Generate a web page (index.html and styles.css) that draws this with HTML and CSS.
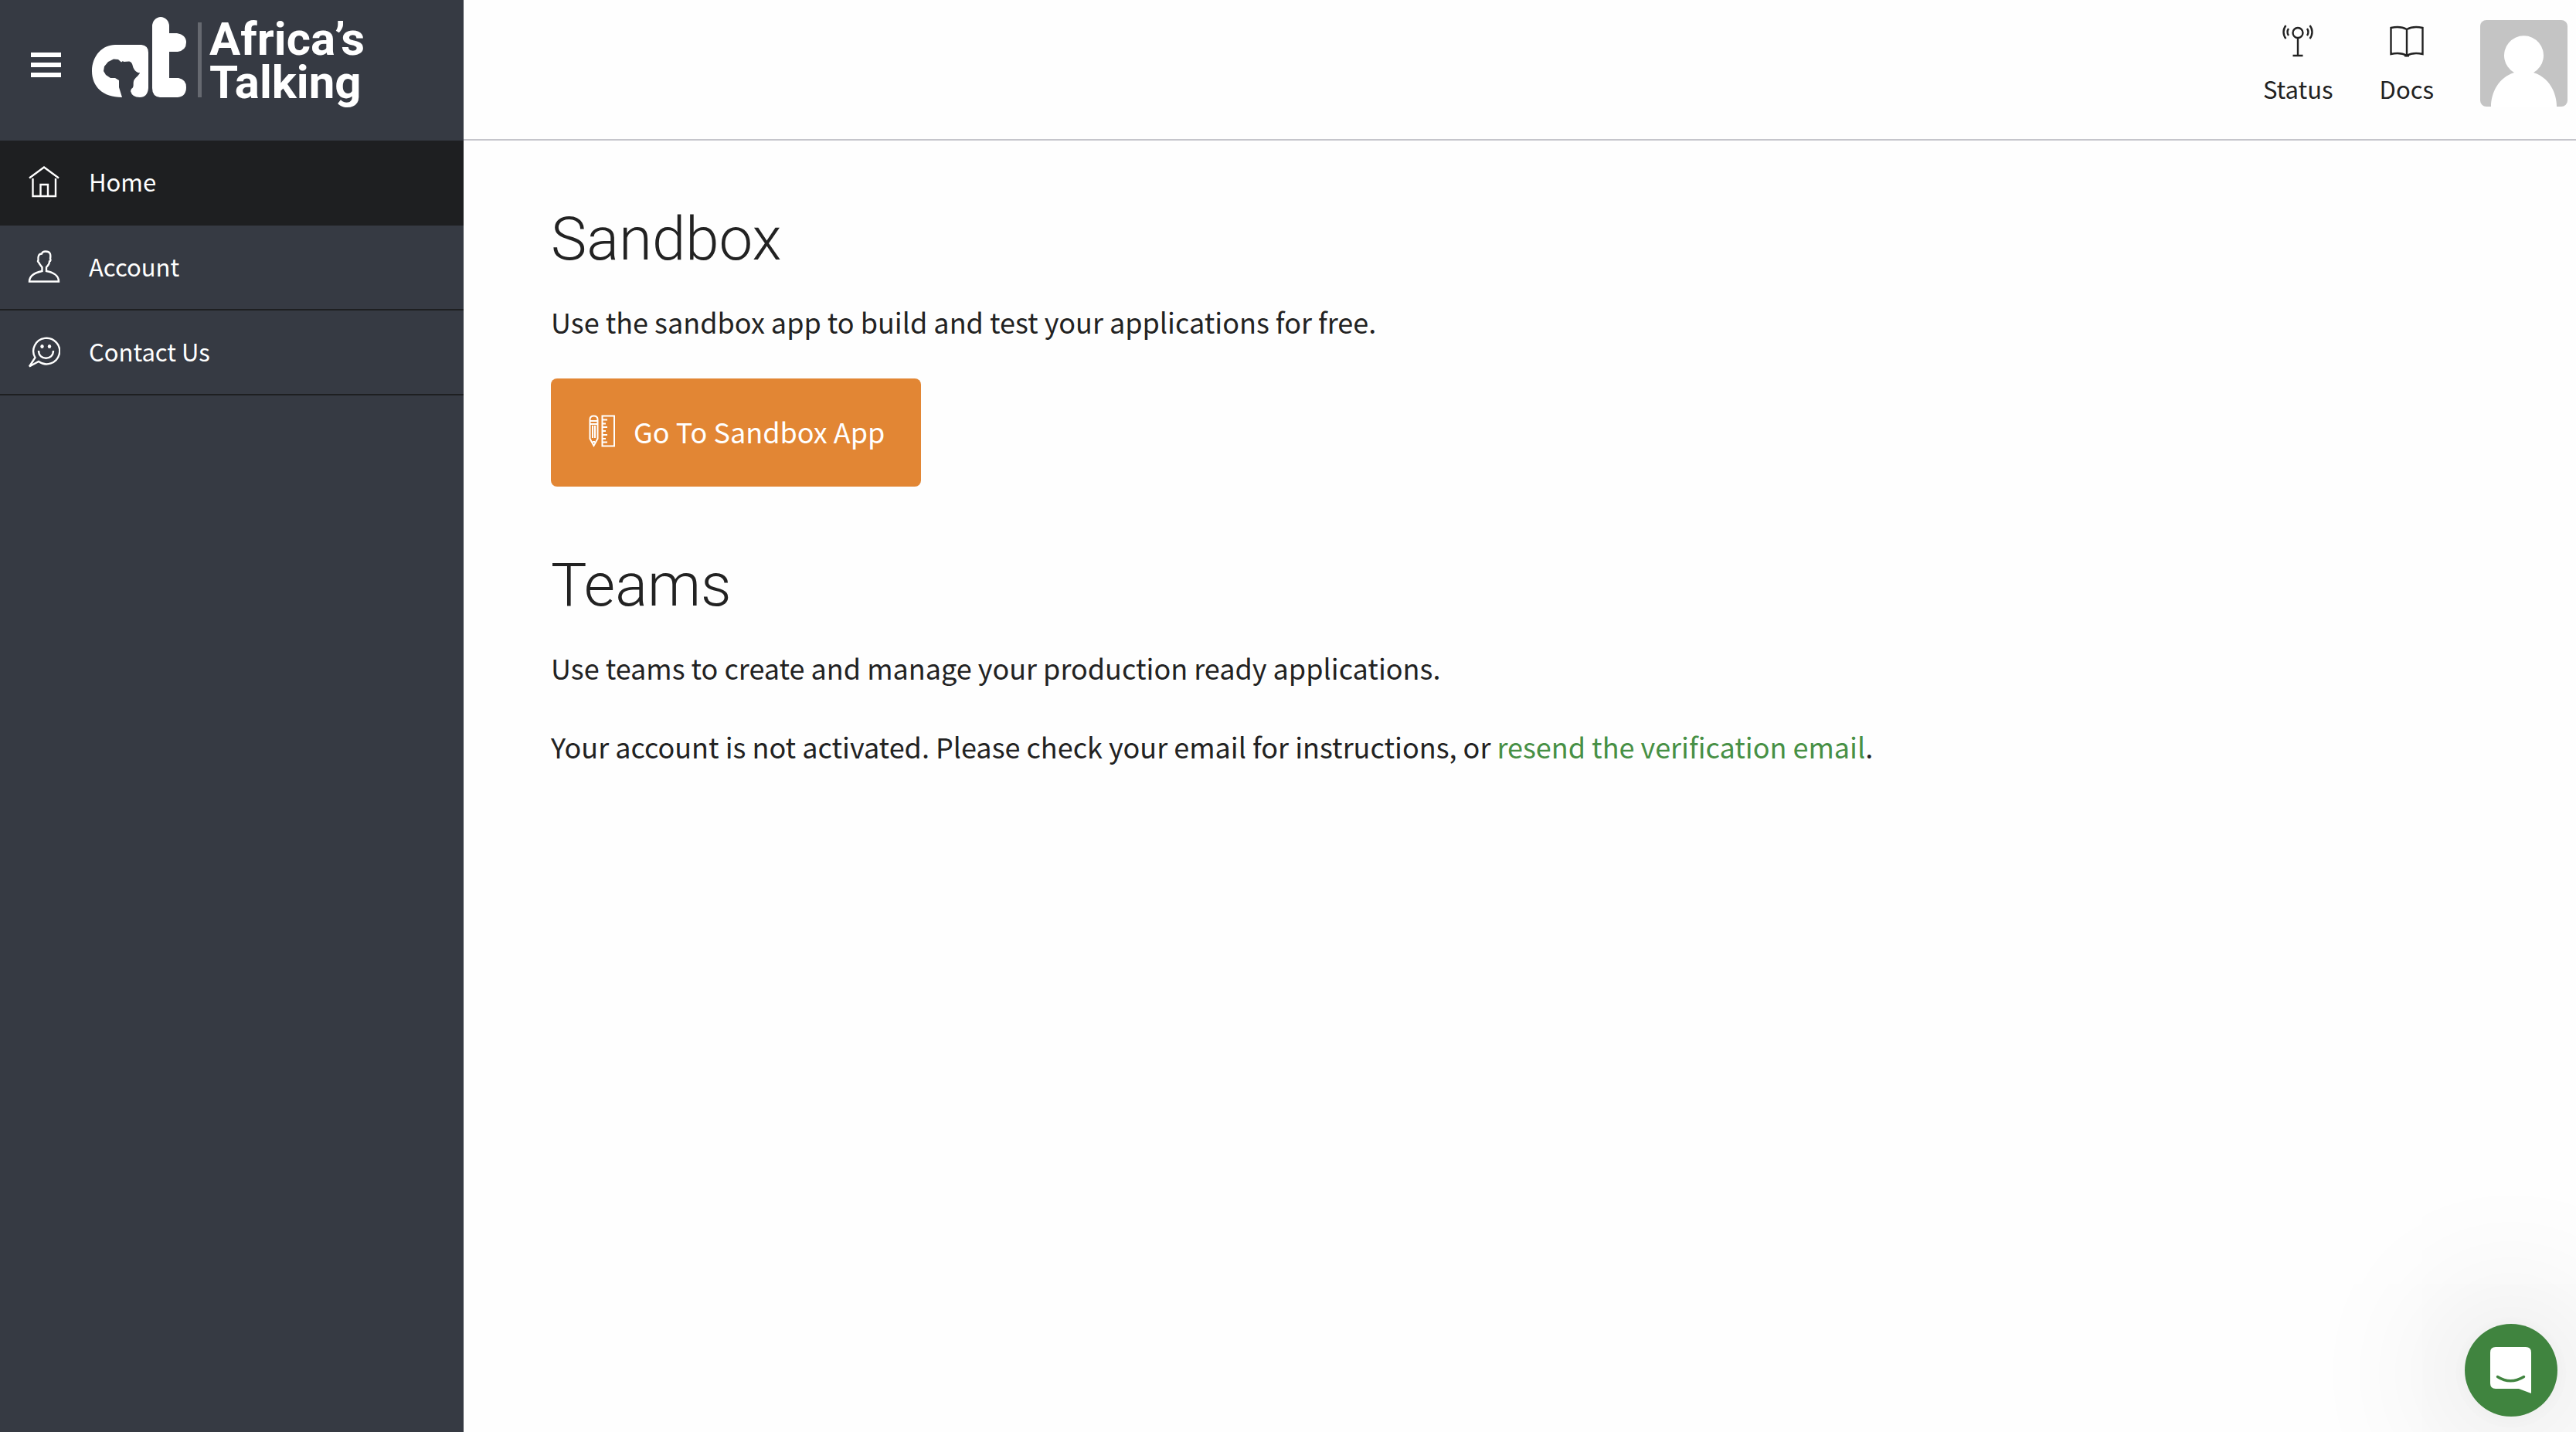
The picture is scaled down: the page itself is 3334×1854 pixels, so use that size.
FILE: index.html
```html
<!DOCTYPE html>
<html lang="en">
<head>
  <meta charset="utf-8">
  <meta name="viewport" content="width=device-width, initial-scale=1">
  <title>Home | Africa's Talking</title>
  <link rel="stylesheet" href="styles.css">
</head>
<body>
  <div class="shell">
    <aside class="sidebar">
      <div class="brand">
        <button class="menu-toggle" type="button" aria-label="Toggle menu">
          <span class="bar"></span><span class="bar"></span><span class="bar"></span>
        </button>
        <a class="logo" href="#" aria-label="Africa's Talking">
          <svg class="logo-mark" viewBox="0 0 142 106" aria-hidden="true">
            <path fill="#fff" d="M30 37H64Q73 38 73 47V93Q72 105 62 105Q52 105 50 97L51 94C55 92 53 88 54 84C55 80 61 77 62 73V73C58 74 54 69 53 65C52 61 51 59 48 58.500L41 59L40 58L38 59.500L34 56L28 55.500L21 59L16 65L15 71L18 76L24 80H30L35 83V92L39 105C14 105 0 91 0 71C0 51 14 37 30 37Z"/>
            <path fill="#fff" d="M78 13A11 12 0 0 1 100 13V22H110Q122 24 122 34Q122 44 111 46H100V80H112Q122 82 122 92Q122 104 111 105H88Q78 104 78 93Z"/>
            <path fill="#666970" d="M137 8h5v97h-5z"/>
          </svg>
          <span class="logo-name">Africa’s<br>Talking</span>
        </a>
      </div>
      <nav class="nav">
        <a class="nav-item nav-item-active" href="#">
          <svg class="nav-icon" viewBox="0 0 42 42" aria-hidden="true">
            <path d="M2 16.500L21 2.500L40 16.500M6.500 17V40H36V17M16.500 40V25H26V40"/>
          </svg>
          <span>Home</span>
        </a>
        <a class="nav-item" href="#">
          <svg class="nav-icon" viewBox="0 0 42 42" aria-hidden="true">
            <path d="M2 40.500H40C40 33 33 28.500 24 27V22C27 19 28 17 28 14.500C30 14 29.500 12 29 11C30 5 29 1.500 23 1.500C20 1.500 18.500 2.500 18 4.500C14 4.500 13 8 13.500 13C12.500 14 13 15 14 15.500C15 18 17 20 18.500 22V27C9 29 2 33 2 40.500Z"/>
          </svg>
          <span>Account</span>
        </a>
        <a class="nav-item" href="#">
          <svg class="nav-icon" viewBox="0 0 42 42" aria-hidden="true">
            <path d="M14 34A17 16.800 0 1 0 9.500 29L2 40.500L14 34ZM14 20C14 33 33 33 33 20"/>
            <ellipse cx="18.500" cy="14.500" rx="2.200" ry="2.500" fill="#fff" stroke="none"/>
            <ellipse cx="28" cy="14.500" rx="2.200" ry="2.500" fill="#fff" stroke="none"/>
          </svg>
          <span>Contact Us</span>
        </a>
      </nav>
    </aside>

    <div class="page">
      <header class="topbar">
        <a class="top-link" href="#">
          <svg class="top-icon" viewBox="0 0 46 42" aria-hidden="true">
            <circle cx="23" cy="10.500" r="6.500"/>
            <path d="M23 17V40M16.500 40H29.500M7.500 1C3.500 6 3.500 13 7.500 18M11 5C9 8 9 11 11 14M38.500 1C42.500 6 42.500 13 38.500 18M35 5C37 8 37 11 35 14"/>
          </svg>
          <span>Status</span>
        </a>
        <a class="top-link" href="#">
          <svg class="top-icon" viewBox="0 0 46 42" aria-hidden="true">
            <path d="M23 6C17 2.500 9 2.500 2.500 4V38C9 36.500 17 36.500 23 40C29 36.500 37 36.500 43.500 38V4C37 2.500 29 2.500 23 6V39"/>
            <path d="M20 40H26" stroke-width="3"/>
          </svg>
          <span>Docs</span>
        </a>
        <button class="avatar" type="button" aria-label="Your profile">
          <svg class="avatar-image" viewBox="0 0 113 112" aria-hidden="true">
            <path fill="#c4c4c4" d="M0 0h113v112H0z"/>
            <path fill="#fff" d="M44 68A25.500 25.500 0 1 1 69 68C89 74 99 94 99 112H14C14 94 24 74 44 68Z"/>
          </svg>
        </button>
      </header>

      <main class="content">
        <section class="section">
          <h1 class="title">Sandbox</h1>
          <p class="text">Use the sandbox app to build and test your applications for free.</p>
          <a class="sandbox-button" href="#">
            <svg class="button-icon" viewBox="0 0 34 42" aria-hidden="true">
              <path d="M1.500 6Q1.500 1.500 6.500 1.500Q11.500 1.500 11.500 6V31L6.500 40L1.500 31ZM1.500 8H11.500M1.500 12H11.500M5 14V30M8 14V30M5 35H8M17.500 1.500H33V40.500H17.500ZM17.500 6.500H24M17.500 11.500H22M17.500 16H24M17.500 21H22M17.500 26H24M17.500 31H22M17.500 35.500H24"/>
            </svg>
            <span>Go To Sandbox App</span>
          </a>
        </section>
        <section class="section">
          <h1 class="title">Teams</h1>
          <p class="text">Use teams to create and manage your production ready applications.</p>
          <p class="text">Your account is not activated. Please check your email for instructions, or <a class="text-link" href="#">resend the verification email</a>.</p>
        </section>
      </main>
    </div>
  </div>

  <button class="chat" type="button" aria-label="Open chat">
    <svg class="chat-icon" viewBox="0 0 54 60" aria-hidden="true">
      <path fill="#fff" d="M7 0H46Q53 0 53 7V60L37 54H7Q0 54 0 47V7Q0 0 7 0Z"/>
      <path fill="none" stroke="#40843f" stroke-width="3.500" stroke-linecap="round" d="M9.500 38.500Q26 49 43.500 38.500"/>
    </svg>
  </button>
</body>
</html>
```
FILE: styles.css
```css
*,
*::before,
*::after {
  box-sizing: border-box;
}

body {
  margin: 0;
  background: #fefefe;
  color: #222;
  font-family: "Noto Sans CJK SC", "Noto Sans", sans-serif;
  font-size: 36px;
  line-height: 56px;
}

a {
  color: inherit;
  text-decoration: none;
}

button {
  padding: 0;
  border: 0;
  background: none;
  cursor: pointer;
}

svg {
  display: block;
  flex: none;
}

.shell {
  display: grid;
  grid-template-columns: 600px 1fr;
  min-height: 100vh;
}

/* Sidebar */

.sidebar {
  background: #363a43;
  color: #fff;
}

.brand {
  display: flex;
  align-items: flex-start;
  gap: 40px;
  height: 182px;
  padding: 21px 40px;
}

.menu-toggle {
  display: flex;
  flex-direction: column;
  gap: 7px;
  width: 39px;
  margin-top: 47px;
}

.bar {
  height: 6px;
  background: #fff;
}

.logo {
  display: flex;
  gap: 10px;
}

.logo-mark {
  width: 142px;
  height: 106px;
}

.logo-name {
  padding-top: 2px;
  font-family: Roboto, sans-serif;
  font-size: 60px;
  font-weight: 700;
  line-height: 56px;
}

.nav-item {
  display: flex;
  align-items: center;
  gap: 37px;
  height: 110px;
  padding: 0 36px 2px;
  border-bottom: 2px solid #1e1f21;
  font-size: 31px;
  line-height: 40px;
}

.nav-item-active {
  background: #1e1f21;
}

.nav-icon {
  width: 42px;
  height: 42px;
  fill: none;
  stroke: #fff;
  stroke-width: 2.4;
}

/* Top bar */

.topbar {
  display: flex;
  justify-content: flex-end;
  align-items: flex-start;
  gap: 60px;
  height: 182px;
  padding: 26px 11px 0;
  border-bottom: 2px solid #c5c5cb;
}

.top-link {
  display: flex;
  flex-direction: column;
  align-items: center;
  gap: 21px;
  padding-top: 6px;
  font-size: 31px;
  line-height: 40px;
}

.top-icon {
  width: 46px;
  height: 42px;
  fill: none;
  stroke: #222;
  stroke-width: 2.4;
}

.avatar {
  overflow: hidden;
  border-radius: 8px;
}

.avatar-image {
  width: 113px;
  height: 112px;
}

/* Content */

.content {
  display: flex;
  flex-direction: column;
  gap: 80px;
  padding: 80px 113px;
}

.title {
  margin: 0 0 30px;
  font-family: Roboto, sans-serif;
  font-size: 78px;
  font-weight: 300;
  line-height: 96px;
}

.text {
  margin: 0 0 46px;
}

.text-link {
  color: #479045;
}

.sandbox-button {
  display: inline-flex;
  align-items: center;
  gap: 24px;
  height: 140px;
  padding: 0 47px 4px 49px;
  border-radius: 8px;
  background: #e28634;
  color: #fff;
  vertical-align: top;
}

.button-icon {
  width: 34px;
  height: 42px;
  fill: none;
  stroke: #fff;
  stroke-width: 2;
}

/* Chat launcher */

.chat {
  position: fixed;
  right: 24px;
  bottom: 20px;
  display: flex;
  align-items: center;
  justify-content: center;
  width: 120px;
  height: 120px;
  border-radius: 50%;
  background: #40843f;
  box-shadow: 0 2px 32px rgba(0, 0, 0, 0.04), 0 4px 180px 40px rgba(0, 0, 0, 0.1);
}

.chat-icon {
  width: 54px;
  height: 60px;
}
```
